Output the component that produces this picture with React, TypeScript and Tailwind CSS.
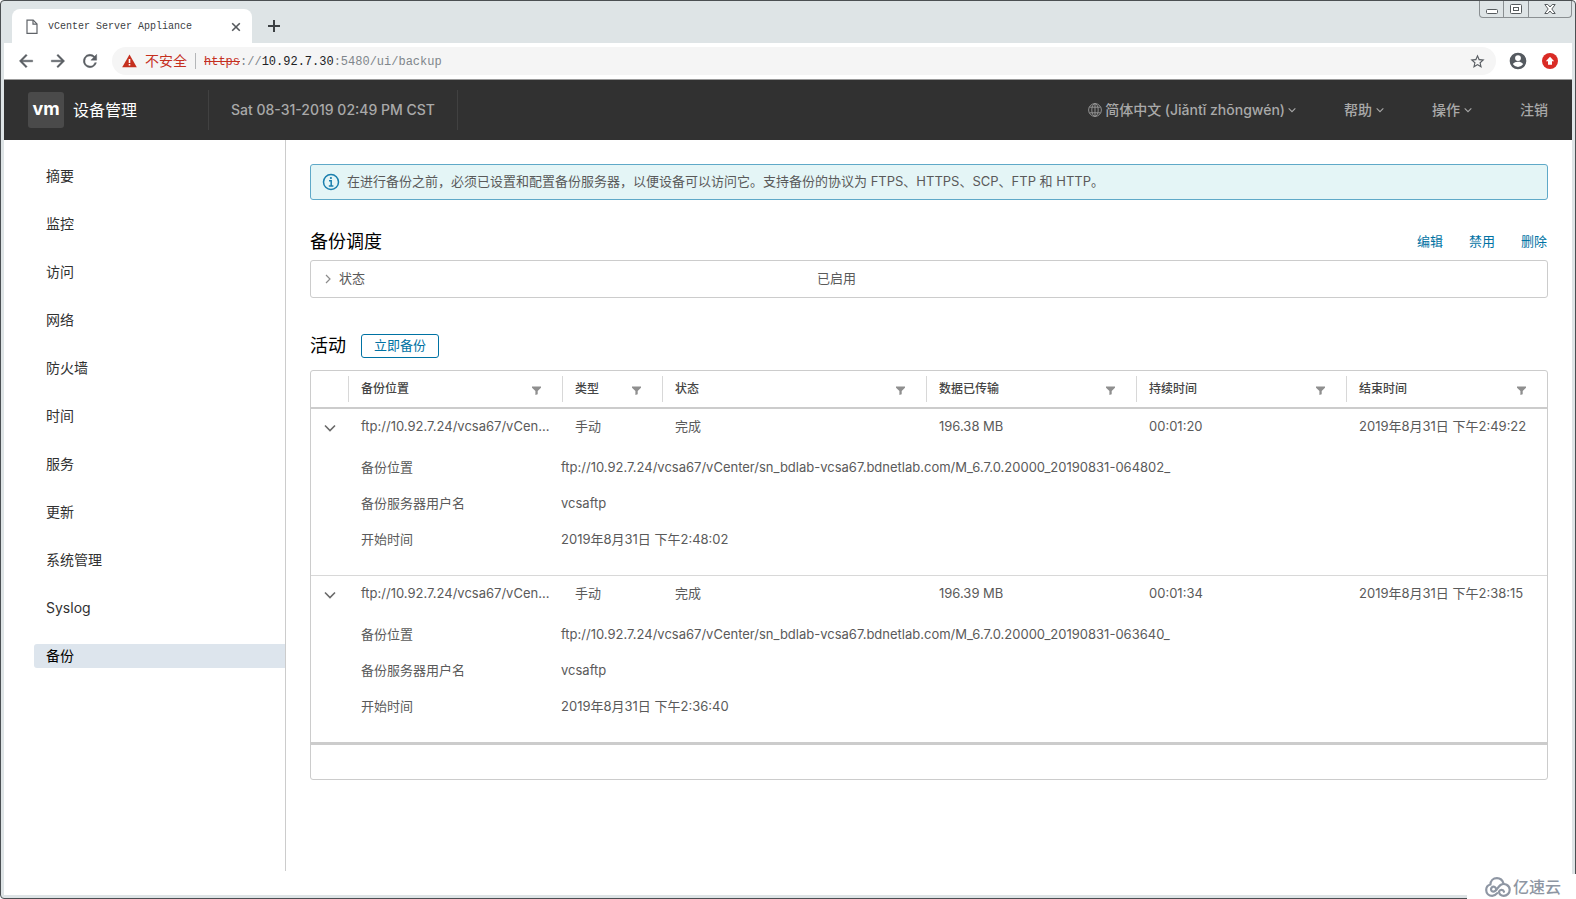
import React, { useState } from 'react';

interface Activity {
  id: string;
  location: string;
  fullLocation: string;
  type: string;
  status: string;
  transferred: string;
  duration: string;
  endTime: string;
  username: string;
  startTime: string;
}

const NAV_ITEMS = ['摘要', '监控', '访问', '网络', '防火墙', '时间', '服务', '更新', '系统管理', 'Syslog', '备份'];

const COLUMNS = [
  { label: '备份位置', width: 'w-[214px]' },
  { label: '类型', width: 'w-[100px]' },
  { label: '状态', width: '' },
  { label: '数据已传输', width: 'w-[210px]' },
  { label: '持续时间', width: 'w-[210px]' },
  { label: '结束时间', width: 'w-[201px]' },
];

const ACTIVITIES: Activity[] = [
  {
    id: 'a1',
    location: 'ftp://10.92.7.24/vcsa67/vCen...',
    fullLocation: 'ftp://10.92.7.24/vcsa67/vCenter/sn_bdlab-vcsa67.bdnetlab.com/M_6.7.0.20000_20190831-064802_',
    type: '手动',
    status: '完成',
    transferred: '196.38 MB',
    duration: '00:01:20',
    endTime: '2019年8月31日 下午2:49:22',
    username: 'vcsaftp',
    startTime: '2019年8月31日 下午2:48:02',
  },
  {
    id: 'a2',
    location: 'ftp://10.92.7.24/vcsa67/vCen...',
    fullLocation: 'ftp://10.92.7.24/vcsa67/vCenter/sn_bdlab-vcsa67.bdnetlab.com/M_6.7.0.20000_20190831-063640_',
    type: '手动',
    status: '完成',
    transferred: '196.39 MB',
    duration: '00:01:34',
    endTime: '2019年8月31日 下午2:38:15',
    username: 'vcsaftp',
    startTime: '2019年8月31日 下午2:36:40',
  },
];

// Icons
const FileIcon = () => (
  <svg width="12" height="16" viewBox="0 0 12 16" fill="none" stroke="#5f6368" strokeWidth="1.2"><path d="M1 1.2h6.2L11 5v9.300H1z"/><path d="M7 1.200V5.200h4"/></svg>
);
const CloseIcon = () => (
  <svg width="10" height="10" viewBox="0 0 10 10" fill="none" stroke="#55595d" strokeWidth="1.6"><path d="m1.200 1.200 7.600 7.600M8.800 1.200 1.200 8.800"/></svg>
);
const NewTabIcon = () => (
  <svg width="12" height="12" viewBox="0 0 12 12" fill="none" stroke="#3c4043" strokeWidth="2"><path d="M6 0v12M0 6h12"/></svg>
);
const BackIcon = () => (
  <svg width="20" height="20" viewBox="0 0 24 24" fill="#5a5e63" stroke="#5a5e63" strokeWidth=".5"><path d="M20 11H7.800l5.600-5.600L12 4l-8 8 8 8 1.400-1.400L7.800 13H20z"/></svg>
);
const ForwardIcon = () => (
  <svg width="20" height="20" viewBox="0 0 24 24" fill="#5a5e63" stroke="#5a5e63" strokeWidth=".5"><path d="m12 4-1.400 1.400L16.200 11H4v2h12.200l-5.600 5.600L12 20l8-8z"/></svg>
);
const ReloadIcon = () => (
  <svg width="20" height="20" viewBox="0 0 24 24" fill="#5a5e63" stroke="#5a5e63" strokeWidth=".5"><path d="M17.650 6.350A8 8 0 1 0 19.730 14h-2.080A6 6 0 1 1 12 6c1.660 0 3.140.69 4.220 1.780L13 11h7V4z"/></svg>
);
const WarningIcon = () => (
  <svg width="15" height="14" viewBox="0 0 15 14"><path d="M7.500.5 14.800 13.200H.2z" fill="#c5301f"/><path d="M6.700 5h1.600v4H6.700zM6.700 10h1.600v1.600H6.700z" fill="#fff"/></svg>
);
const StarIcon = () => (
  <svg width="17" height="17" viewBox="0 0 24 24" fill="#5a5e63"><path d="m22 9.240-7.190-.62L12 2 9.190 8.630 2 9.240l5.460 4.730L5.820 21 12 17.270 18.180 21l-1.630-7.030zM12 15.400l-3.760 2.270 1-4.280-3.320-2.880 4.380-.38L12 6.100l1.710 4.040 4.380.38-3.320 2.880 1 4.280z"/></svg>
);
const AccountIcon = () => (
  <svg width="20" height="20" viewBox="0 0 24 24" fill="#555a60"><path d="M12 2a10 10 0 1 0 0 20 10 10 0 0 0 0-20zm0 3a3.500 3.500 0 1 1 0 7 3.500 3.500 0 0 1 0-7zm0 14.200a7.200 7.200 0 0 1-6-3.220c.03-1.990 4-3.080 6-3.080s5.970 1.090 6 3.080a7.200 7.200 0 0 1-6 3.220z"/></svg>
);
const UpdateIcon = () => (
  <svg width="16" height="16" viewBox="0 0 16 16"><circle cx="8" cy="8" r="8" fill="#d92b25"/><path d="m8 3.800 4.200 4.400H10V11.800H6V8.200H3.800z" fill="#fff"/></svg>
);
const GlobeIcon = () => (
  <svg width="14" height="14" viewBox="0 0 14 14" fill="none" stroke="#9a9a9a" strokeWidth=".9"><circle cx="7" cy="7" r="6.400"/><ellipse cx="7" cy="7" rx="3.200" ry="6.400"/><path d="M7 .6v12.800M1.400 4.200h11.200M1.400 9.800h11.200"/></svg>
);
const ChevronDown = ({ className = 'h-2 w-2' }: { className?: string }) => (
  <svg className={className} viewBox="0 0 12 8" fill="none" stroke="currentColor" strokeWidth="1.6"><path d="m1 1.500 5 5 5-5"/></svg>
);
const ChevronRight = () => (
  <svg width="6" height="10" viewBox="0 0 6 10" fill="none" stroke="#8c8c8c" strokeWidth="1.200"><path d="m1 1 4 4-4 4"/></svg>
);
const InfoIcon = () => (
  <svg width="18" height="18" viewBox="0 0 18 18" fill="none" stroke="#1a7fae" strokeWidth="1.500"><circle cx="9" cy="9" r="7.500"/><path d="M7 7.800h2.200v5M6.800 12.900h4.600"/><circle cx="8.900" cy="5" r="1.100" fill="#1a7fae" stroke="none"/></svg>
);
const FilterIcon = () => (
  <svg width="9" height="9" viewBox="0 0 9 9" fill="#8f8f8f"><path d="M0 .5h9v1.300L5.700 5v3.200L3.400 9V5L0 1.800z"/></svg>
);
const CloudIcon = () => (
  <svg width="26" height="20" viewBox="0 0 26 20" fill="none" stroke="#8e96a3" strokeWidth="2.200" strokeLinecap="round"><path d="M11 12.500a2.500 2.500 0 1 0-2.500 2.200c3 0 4-4.700 7-6.700 4-2.500 9.200.2 9.200 4.700 0 3.800-3 6.100-6 6.100-2.700 0-4.700-1.800-4.700-4.200a2.600 2.600 0 0 1 5 .2"/><path d="M18.500 6.500C17.500 3 15 1.200 12 1.200 8 1.200 5.500 4 5.400 7.500 2.800 8.200 1.200 10.500 1.200 13c0 3.300 2.600 5.800 6 5.800 2.200 0 3.800-1 5-2.600"/></svg>
);

const WindowButtons = () => (
  <div className="flex h-[17px] rounded-b border border-t-0 border-[#8a8f92] text-[#565b5e]">
    <button aria-label="最小化" className="flex w-6 items-end justify-center border-r border-[#8a8f92] pb-[3px]">
      <svg width="12" height="5" viewBox="0 0 12 5" fill="#fff" stroke="currentColor"><rect x=".5" y=".5" width="11" height="4" rx="1"/></svg>
    </button>
    <button aria-label="最大化" className="flex w-[25px] items-center justify-center border-r border-[#8a8f92]">
      <svg width="12" height="10" viewBox="0 0 12 10" fill="#fff" stroke="currentColor"><rect x=".5" y=".5" width="11" height="9" rx="1"/><rect x="3.500" y="3.500" width="5" height="3"/></svg>
    </button>
    <button aria-label="关闭窗口" className="flex w-[42px] items-center justify-center">
      <svg width="12" height="10" viewBox="0 0 12 10" fill="#fff" stroke="currentColor"><path d="M.8.5h3L6 3 8.200.5h3L7.800 5l3.400 4.500h-3L6 7 3.800 9.500h-3L4.200 5z"/></svg>
    </button>
  </div>
);

const BrowserChrome = () => (
  <>
    <div className="flex h-[42px] items-end bg-[#dee4e6]">
      <div className="ml-2 flex h-[34px] w-60 items-center rounded-t-lg bg-white pt-px pr-[11px] pl-3.5 text-[#3c4043]">
        <FileIcon />
        <span className="ml-2.5 flex-1 font-['Liberation_Mono',monospace] text-[10px]">vCenter Server Appliance</span>
        <button aria-label="关闭标签页"><CloseIcon /></button>
      </div>
      <button aria-label="新标签页" className="mb-[11px] ml-4"><NewTabIcon /></button>
      <div className="ml-auto self-start"><WindowButtons /></div>
    </div>
    <div className="flex h-9 items-center bg-white pr-3.5 pl-3">
      <div className="flex gap-3">
        <button aria-label="后退"><BackIcon /></button>
        <button aria-label="前进"><ForwardIcon /></button>
        <button aria-label="重新加载"><ReloadIcon /></button>
      </div>
      <div className="ml-3 flex h-7 flex-1 items-center rounded-full bg-[#f5f5f5] pr-2.5 pl-2.5">
        <WarningIcon />
        <span className="ml-2 text-sm text-[#c5301f]">不安全</span>
        <span className="mx-2 h-4 w-px bg-[#b4b6b8]" />
        <div className="flex-1 pt-0.5 font-['Liberation_Mono',monospace] text-xs text-[#80868b]">
          <span className="text-[#c5301f] line-through">https</span>://<span className="text-[#202124]">10.92.7.30</span>:5480/ui/backup
        </div>
        <button aria-label="加入书签"><StarIcon /></button>
      </div>
      <button aria-label="用户" className="ml-3"><AccountIcon /></button>
      <button aria-label="更新" className="ml-3.5"><UpdateIcon /></button>
    </div>
  </>
);

const Header = () => (
  <header className="flex h-[61px] items-center border-t border-[#9b9b9b] bg-[#313131] px-6 text-sm text-[#a9a9a9]">
    <div className="flex h-9 w-9 items-center justify-center rounded-[3px] bg-[#4a4a4a] pb-0.5 text-lg font-bold text-white">vm</div>
    <h1 className="ml-[9px] w-[135px] text-base text-white">设备管理</h1>
    <div className="flex h-10 items-center border-x border-[#414141] px-[22px] font-medium">Sat 08-31-2019 02:49 PM CST</div>
    <nav className="ml-auto flex items-center gap-12 font-medium">
      <button className="flex items-center gap-[3px]">
        <GlobeIcon />
        <span>简体中文 (Jiǎntǐ zhōngwén)</span>
        <ChevronDown />
      </button>
      <button className="flex items-center gap-1">帮助<ChevronDown /></button>
      <button className="flex items-center gap-1">操作<ChevronDown /></button>
      <button>注销</button>
    </nav>
  </header>
);

const ActivityRow = ({ item }: { item: Activity }) => {
  const [open, setOpen] = useState(true);
  const details = [
    ['备份位置', item.fullLocation],
    ['备份服务器用户名', item.username],
    ['开始时间', item.startTime],
  ];

  return (
    <tbody className="group">
      <tr className="h-9">
        <td className="p-0 text-center">
          <button aria-label="展开" aria-expanded={open} onClick={() => setOpen(!open)} className="align-middle text-[#6a6a6a]">
            <ChevronDown className="h-2 w-3" />
          </button>
        </td>
        <td className="py-0 pl-[13px] whitespace-nowrap">{item.location}</td>
        <td className="py-0 pl-[13px]">{item.type}</td>
        <td className="py-0 pl-[13px]">{item.status}</td>
        <td className="py-0 pl-[13px]">{item.transferred}</td>
        <td className="py-0 pl-[13px]">{item.duration}</td>
        <td className="py-0 pl-[13px] whitespace-nowrap">{item.endTime}</td>
      </tr>
      {open && (
        <tr>
          <td className="border-b border-[#d8d8d8] group-last:border-b-0" />
          <td colSpan={6} className="border-b border-[#d8d8d8] pt-1 pb-[18px] pl-[13px] group-last:border-b-0">
            <dl className="grid grid-cols-[200px_1fr]">
              {details.map(([label, value]) => (
                <React.Fragment key={label}>
                  <dt className="h-9 leading-9">{label}</dt>
                  <dd className="h-9 leading-9">{value}</dd>
                </React.Fragment>
              ))}
            </dl>
          </td>
        </tr>
      )}
    </tbody>
  );
};

const App: React.FC = () => {
  const [currentNav, setCurrentNav] = useState('备份');

  return (
    <div className="relative flex min-h-screen flex-col rounded border border-[#4b4f52] bg-[#dee4e6] px-[3px] pb-[3px] font-['Inter','Noto_Sans_CJK_SC',sans-serif]">
      <BrowserChrome />
      <Header />

      <div className="flex flex-1 bg-white pb-6">
        <aside className="w-[282px] shrink-0 border-r border-[#ccc] pt-6 pl-[30px]">
          <nav className="flex flex-col gap-6 text-sm text-[#313131]">
            {NAV_ITEMS.map((item) => (
              <a
                key={item}
                href="#"
                onClick={() => setCurrentNav(item)}
                className={`h-6 rounded-l-[3px] pl-3 leading-6 ${item === currentNav ? 'bg-[#dde5ed] text-black' : ''}`}
              >
                {item}
              </a>
            ))}
          </nav>
        </aside>

        <main className="min-w-0 flex-1 p-6 text-[13px] text-[#5a5a5a]">
          <div className="flex h-9 items-center gap-[7px] rounded-[3px] border border-[#5fa9c8] bg-[#e4f5f6] px-[11px]">
            <InfoIcon />
            <p>在进行备份之前，必须已设置和配置备份服务器，以便设备可以访问它。支持备份的协议为 FTPS、HTTPS、SCP、FTP 和 HTTP。</p>
          </div>

          <div className="mt-7 mb-1 flex h-7 items-center justify-between">
            <h2 className="text-lg text-black">备份调度</h2>
            <div className="flex gap-[26px] pr-px text-[#0072a3]">
              <button>编辑</button>
              <button>禁用</button>
              <button>删除</button>
            </div>
          </div>
          <div className="flex h-[38px] items-center rounded-[3px] border border-[#ccc]">
            <button className="flex w-[506px] items-center gap-2 pl-3.5">
              <ChevronRight />
              状态
            </button>
            <span>已启用</span>
          </div>

          <div className="mt-9 mb-3 flex h-6 items-center gap-[15px]">
            <h2 className="text-lg text-black">活动</h2>
            <button className="h-6 rounded-[3px] border border-[#0072a3] px-3 text-[#0072a3]">立即备份</button>
          </div>

          <div className="rounded-[3px] border border-[#ccc]">
            <table className="w-full table-fixed border-separate border-spacing-0 text-left">
              <thead>
                <tr className="h-[38px]">
                  <th className="w-[37px] border-b-2 border-[#ccc] p-0" aria-label="展开" />
                  {COLUMNS.map((col) => (
                    <th key={col.label} className={`border-b-2 border-[#ccc] p-0 font-medium text-[#454545] ${col.width}`}>
                      <div className="flex h-[26px] items-center justify-between border-l border-[#d8d8d8] pr-[21px] pl-3 text-xs">
                        {col.label}
                        <button aria-label="筛选" className="pt-[3px]"><FilterIcon /></button>
                      </div>
                    </th>
                  ))}
                </tr>
              </thead>
              {ACTIVITIES.map((item) => <ActivityRow key={item.id} item={item} />)}
            </table>
            <div className="h-[37px] border-t-[3px] border-[#ccc]" />
          </div>
        </main>
      </div>

      <div className="absolute -right-px -bottom-px flex h-[25px] w-[109px] items-center gap-0.5 bg-white pl-[18px] text-base font-medium text-[#8e96a3]">
        <CloudIcon />
        亿速云
      </div>
    </div>
  );
};

export default App;
